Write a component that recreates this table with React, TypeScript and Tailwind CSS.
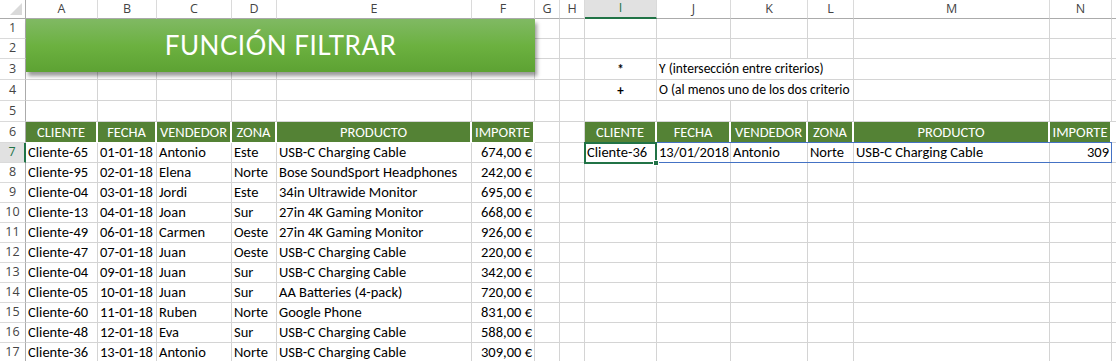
import React from 'react';

const cols = ['A', 'B', 'C', 'D', 'E', 'F', 'G', 'H', 'I', 'J', 'K', 'L', 'M', 'N', ''];

// row heights (incl. bottom gridline), rows 1..17
const rowHeights = [20, 20, 21, 21, 21, 21, 20, 20, 20, 20, 20, 20, 20, 20, 20, 20, 20];

const data = [
    ['Cliente-65', '01-01-18', 'Antonio', 'Este', 'USB-C Charging Cable', '674,00 €'],
    ['Cliente-95', '02-01-18', 'Elena', 'Norte', 'Bose SoundSport Headphones', '242,00 €'],
    ['Cliente-04', '03-01-18', 'Jordi', 'Este', '34in Ultrawide Monitor', '695,00 €'],
    ['Cliente-13', '04-01-18', 'Joan', 'Sur', '27in 4K Gaming Monitor', '668,00 €'],
    ['Cliente-49', '06-01-18', 'Carmen', 'Oeste', '27in 4K Gaming Monitor', '926,00 €'],
    ['Cliente-47', '07-01-18', 'Juan', 'Oeste', 'USB-C Charging Cable', '220,00 €'],
    ['Cliente-04', '09-01-18', 'Juan', 'Sur', 'USB-C Charging Cable', '342,00 €'],
    ['Cliente-05', '10-01-18', 'Juan', 'Sur', 'AA Batteries (4-pack)', '720,00 €'],
    ['Cliente-60', '11-01-18', 'Ruben', 'Norte', 'Google Phone', '831,00 €'],
    ['Cliente-48', '12-01-18', 'Eva', 'Sur', 'USB-C Charging Cable', '588,00 €'],
    ['Cliente-36', '13-01-18', 'Antonio', 'Norte', 'USB-C Charging Cable', '309,00 €'],
];

const headers = ['CLIENTE', 'FECHA', 'VENDEDOR', 'ZONA', 'PRODUCTO', 'IMPORTE'];

function Cell({ children, right, center, span }: { children?: React.ReactNode; right?: boolean; center?: boolean; span?: string }) {
    return (
        <div
            className={`border-r border-b border-[#d4d4d4] flex items-center px-[2px] pt-[1px] overflow-hidden whitespace-nowrap text-black ${span ?? ''} ${right ? 'justify-end' : center ? 'justify-center' : ''}`}
        >
            {children}
        </div>
    );
}

function HeadCell({ children }: { children: React.ReactNode }) {
    return (
        <div className="border-r-[2px] border-b border-white bg-[#548235] text-white flex items-center justify-center whitespace-nowrap overflow-hidden pt-[1px]">
            {children}
        </div>
    );
}

function RowHeader({ n, selected }: { n: number; selected?: boolean }) {
    return (
        <div
            className={`flex items-center justify-center border-b border-[#dadada] font-['Open_Sans',sans-serif] text-[12.5px] ${
                selected ? 'bg-[#e1e1e1] text-[#217346] border-r-[2px] border-r-[#217346]' : 'bg-white text-[#444] border-r border-r-[#ababab]'
            }`}
        >
            {n}
        </div>
    );
}

export default function App() {
    const renderRow = (r: number) => {
        const cells: React.ReactNode[] = [];
        if (r === 3 || r === 4) {
            for (let c = 0; c < 8; c++) cells.push(<Cell key={c} />);
            cells.push(
                <Cell key="I" center>
                    <span className="text-[13px] font-bold">{r === 3 ? '*' : '+'}</span>
                </Cell>
            );
            cells.push(
                <Cell key="J" span="col-span-3">
                    <span className="text-[13.5px]">
                        {r === 3 ? 'Y (intersección entre criterios)' : 'O (al menos uno de los dos criterio'}
                    </span>
                </Cell>
            );
            for (let c = 12; c < 15; c++) cells.push(<Cell key={c} />);
        } else if (r === 6) {
            cells.push(...headers.map((h) => <HeadCell key={'l' + h}>{h}</HeadCell>));
            cells.push(<Cell key="G" />, <Cell key="H" />);
            cells.push(...headers.map((h) => <HeadCell key={'r' + h}>{h}</HeadCell>));
            cells.push(<Cell key="O" />);
        } else if (r >= 7) {
            const d = data[r - 7];
            d.forEach((v, i) => cells.push(<Cell key={i} right={i === 5}>{v}</Cell>));
            cells.push(<Cell key="G" />, <Cell key="H" />);
            if (r === 7) {
                ['Cliente-36', '13/01/2018', 'Antonio', 'Norte', 'USB-C Charging Cable'].forEach((v, i) =>
                    cells.push(<Cell key={'r' + i}>{v}</Cell>)
                );
                cells.push(<Cell key="N" right>309</Cell>);
            } else {
                for (let c = 8; c < 14; c++) cells.push(<Cell key={c} />);
            }
            cells.push(<Cell key="O" />);
        } else {
            for (let c = 0; c < 15; c++) cells.push(<Cell key={c} />);
        }
        return cells;
    };

    return (
        <div className="relative w-[1116px] h-[361px] overflow-hidden bg-white font-['Carlito','Lato',sans-serif] text-[14.5px]">
            <div
                className="grid grid-cols-[26px_72px_59px_75px_45px_195px_63px_25px_25px_72px_74px_77px_46px_196px_62px_60px]"
                style={{ gridTemplateRows: ['19px', ...rowHeights.map((h) => h + 'px')].join(' ') }}
            >
                {/* corner */}
                <div className="border-r border-b border-[#ababab] bg-white flex items-end justify-end pb-[3px] pr-[3px]">
                    <svg width="12" height="12" viewBox="0 0 12 12">
                        <polygon points="12,0 12,12 0,12" fill="#dadada" />
                    </svg>
                </div>
                {cols.map((c, i) => (
                    <div
                        key={i}
                        className={`flex items-center justify-center font-['Open_Sans',sans-serif] text-[12.5px] border-r border-r-[#dadada] ${
                            c === 'I'
                                ? 'bg-[#e1e1e1] text-[#217346] border-b-[2px] border-b-[#217346]'
                                : 'bg-white text-[#444] border-b border-b-[#ababab]'
                        }`}
                    >
                        {c}
                    </div>
                ))}
                {rowHeights.map((_, i) => {
                    const r = i + 1;
                    return (
                        <React.Fragment key={r}>
                            <RowHeader n={r} selected={r === 7} />
                            {renderRow(r)}
                        </React.Fragment>
                    );
                })}
            </div>

            {/* title banner */}
            <div className="absolute left-[26px] top-[19px] w-[509px] h-[53px] bg-gradient-to-b from-[#80b963] via-[#6cb140] to-[#5da233] shadow-[2px_4px_4px_rgba(0,0,0,0.4)] flex items-center justify-center">
                <span className="text-white text-[26px] font-['Lato',sans-serif] tracking-[0.5px]">FUNCIÓN FILTRAR</span>
            </div>

            {/* spill range border */}
            <div className="absolute left-[584px] top-[142px] w-[528px] h-[21px] border border-[#4472c4] pointer-events-none" />
            {/* active cell */}
            <div className="absolute left-[584px] top-[142px] w-[73px] h-[22px] border-[2px] border-[#217346] pointer-events-none" />
            <div className="absolute left-[653px] top-[160px] w-[6px] h-[6px] bg-[#217346] border border-white" />
        </div>
    );
}
